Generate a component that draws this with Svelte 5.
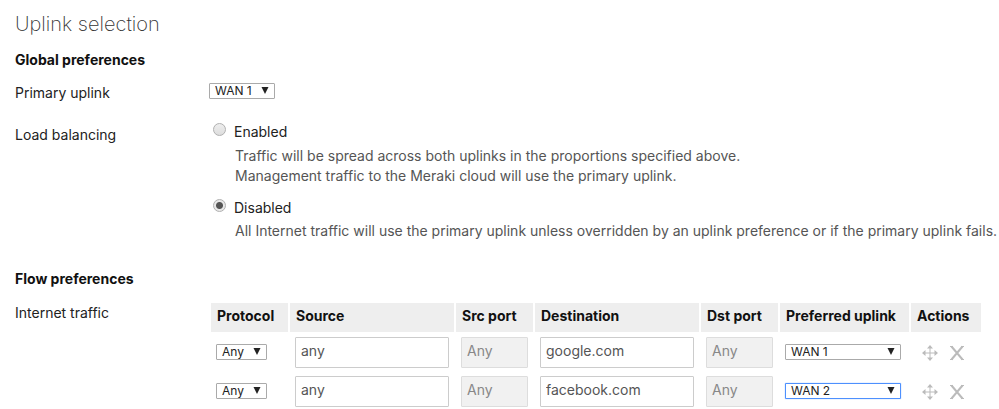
<script lang="ts">
	type Rule = {
		protocol: string
		source: string
		destination: string
		uplink: string
	}

	const uplinks = ['WAN 1', 'WAN 2']
	const protocols = ['Any', 'TCP', 'UDP']

	let primaryUplink = 'WAN 1'
	let loadBalancing = 'disabled'
	let rules: Rule[] = [
		{ protocol: 'Any', source: 'any', destination: 'google.com', uplink: 'WAN 1' },
		{ protocol: 'Any', source: 'any', destination: 'facebook.com', uplink: 'WAN 2' }
	]

	// the row whose uplink was edited last keeps its highlight
	let activeRule = 1

	const removeRule = (index: number) => {
		rules = rules.filter((_, i) => i !== index)
	}
</script>

<main>
	<h1>Uplink selection</h1>

	<h2>Global preferences</h2>
	<div class="row primary">
		<label class="name" for="primary-uplink">Primary uplink</label>
		<span class="select small">
			<select id="primary-uplink" bind:value={primaryUplink}>
				{#each uplinks as uplink}
					<option>{uplink}</option>
				{/each}
			</select>
			<svg viewBox="0 0 8 7"><path d="M.5 0h7L4 7z" /></svg>
		</span>
	</div>
	<div class="row balancing">
		<div class="name" id="balancing-label">Load balancing</div>
		<div class="choices" role="radiogroup" aria-labelledby="balancing-label">
			<label class="choice">
				<input type="radio" value="enabled" bind:group={loadBalancing} />
				<span>Enabled</span>
			</label>
			<p>
				Traffic will be spread across both uplinks in the proportions specified above.<br />
				Management traffic to the Meraki cloud will use the primary uplink.
			</p>
			<label class="choice">
				<input type="radio" value="disabled" bind:group={loadBalancing} />
				<span>Disabled</span>
			</label>
			<p>All Internet traffic will use the primary uplink unless overridden by an uplink preference or if the primary uplink fails.</p>
		</div>
	</div>

	<h2 class="flow">Flow preferences</h2>
	<div class="row traffic">
		<div class="name">Internet traffic</div>
		<table>
			<colgroup>
				<col class="port" />
				<col class="host" />
				<col class="port" />
				<col class="host" />
				<col class="port" />
				<col class="uplink" />
				<col class="actions" />
			</colgroup>
			<thead>
				<tr>
					<th>Protocol</th>
					<th>Source</th>
					<th>Src port</th>
					<th>Destination</th>
					<th>Dst port</th>
					<th>Preferred uplink</th>
					<th>Actions</th>
				</tr>
			</thead>
			<tbody>
				{#each rules as rule, i}
					<tr>
						<td>
							<span class="select protocol">
								<select aria-label="Protocol" bind:value={rule.protocol}>
									{#each protocols as protocol}
										<option>{protocol}</option>
									{/each}
								</select>
								<svg viewBox="0 0 8 7"><path d="M.5 0h7L4 7z" /></svg>
							</span>
						</td>
						<td><input type="text" aria-label="Source" bind:value={rule.source} /></td>
						<td><input type="text" aria-label="Src port" value="Any" disabled /></td>
						<td><input type="text" aria-label="Destination" bind:value={rule.destination} /></td>
						<td><input type="text" aria-label="Dst port" value="Any" disabled /></td>
						<td>
							<span class="select wide" class:active={i === activeRule}>
								<select aria-label="Preferred uplink" bind:value={rule.uplink} on:focus={() => (activeRule = i)}>
									{#each uplinks as uplink}
										<option>{uplink}</option>
									{/each}
								</select>
								<svg viewBox="0 0 8 7"><path d="M.5 0h7L4 7z" /></svg>
							</span>
						</td>
						<td>
							<div class="buttons">
								<button aria-label="Move rule">
									<svg viewBox="0 0 16 16">
										<path class="line" d="M8 2v12M2 8h12" />
										<path class="head" d="M8 0l3 3.5H5zM8 16l3-3.5H5zM0 8l3.5-3v6zM16 8l-3.5-3v6z" />
									</svg>
								</button>
								<button aria-label="Delete rule" on:click={() => removeRule(i)}>
									<svg viewBox="0 0 16 16">
										<path class="cross" d="M2.5 1.5l11 13M13.5 1.5l-11 13" />
										<path class="line" d="M1 1.5h3M12 1.5h3M1 14.5h3M12 14.5h3" />
									</svg>
								</button>
							</div>
						</td>
					</tr>
				{/each}
			</tbody>
		</table>
	</div>
</main>

<style>
	:global(body) {
		margin: 0;
		background: #fff;
	}

	main {
		padding: 12px 0 0 15px;
		font-family: Inter, "Liberation Sans", sans-serif;
		font-size: 14px;
		line-height: 20px;
		color: #222;
	}

	h1 {
		margin: 0 0 14px;
		font-size: 20px;
		font-weight: 200;
		line-height: 24px;
		color: #333;
	}

	h2 {
		margin: 0;
		font-size: 14px;
		font-weight: 700;
		line-height: 20px;
		color: #111;
	}

	.flow {
		margin-top: 28px;
	}

	.row {
		display: flex;
		align-items: flex-start;
	}

	.name {
		flex: 0 0 194px;
	}

	.primary {
		margin-top: 13px;
	}

	.balancing {
		margin-top: 19px;
	}

	.balancing .name {
		padding-top: 3px;
	}

	.traffic {
		margin-top: 12px;
	}

	.traffic .name {
		padding-top: 2px;
	}

	.choices {
		padding-left: 4px;
	}

	.choice {
		display: flex;
		gap: 8px;
	}

	input[type="radio"] {
		appearance: none;
		box-sizing: border-box;
		width: 13px;
		height: 13px;
		margin: 1px 0 0;
		border: 1px solid #b0b0b0;
		border-radius: 50%;
		background: linear-gradient(#eee, #ddd);
	}

	input[type="radio"]:checked {
		background: radial-gradient(circle, #555 3px, #e8e8e8 4px);
	}

	p {
		margin: 4px 0 12px;
		padding-left: 22px;
		color: #555;
	}

	p:last-child {
		margin: 3px 0 0;
	}

	.select {
		position: relative;
		display: block;
	}

	.select select {
		appearance: none;
		display: block;
		box-sizing: border-box;
		width: 100%;
		height: 16px;
		margin: 0;
		padding: 0 5px;
		border: 1px solid #aaa;
		border-radius: 1px;
		background: #fff;
		font-family: inherit;
		font-size: 12px;
		line-height: 14px;
		color: #222;
		outline: none;
	}

	.select svg {
		position: absolute;
		top: 4px;
		right: 6px;
		width: 8px;
		height: 7px;
		fill: #222;
		pointer-events: none;
	}

	.small {
		width: 66px;
	}

	td .select {
		margin-bottom: 2px;
	}

	.protocol {
		width: 51px;
	}

	.wide {
		width: 116px;
	}

	.active select {
		border-color: #4d90fe;
		box-shadow: 0 0 1px #4d90fe;
	}

	table {
		table-layout: fixed;
		width: 773px;
		border-spacing: 2px;
	}

	.port {
		width: 77px;
	}

	.host {
		width: 164px;
	}

	.uplink {
		width: 129px;
	}

	.actions {
		width: 70px;
	}

	th {
		height: 29px;
		padding: 0 0 4px 6px;
		box-sizing: border-box;
		background: #eee;
		text-align: left;
		font-weight: 700;
		white-space: nowrap;
		color: #111;
	}

	td {
		padding: 3px 5px;
		vertical-align: middle;
	}

	input[type="text"] {
		display: block;
		box-sizing: border-box;
		width: 100%;
		height: 31px;
		margin: 0;
		padding: 0 5px 4px;
		border: 1px solid #ccc;
		border-radius: 1px;
		background: #fff;
		font-family: inherit;
		font-size: 14px;
		color: #555;
	}

	input[type="text"]:disabled {
		border-color: #ddd;
		background: #f1f1f1;
		color: #888;
	}

	.buttons {
		display: flex;
		gap: 11px;
		padding-left: 6px;
	}

	button {
		padding: 0;
		border: none;
		background: none;
		cursor: pointer;
	}

	button svg {
		display: block;
		width: 16px;
		height: 16px;
		fill: none;
		stroke: #bbb;
	}

	.head {
		fill: #bbb;
		stroke: none;
	}

	.cross {
		stroke-width: 2;
	}
</style>
